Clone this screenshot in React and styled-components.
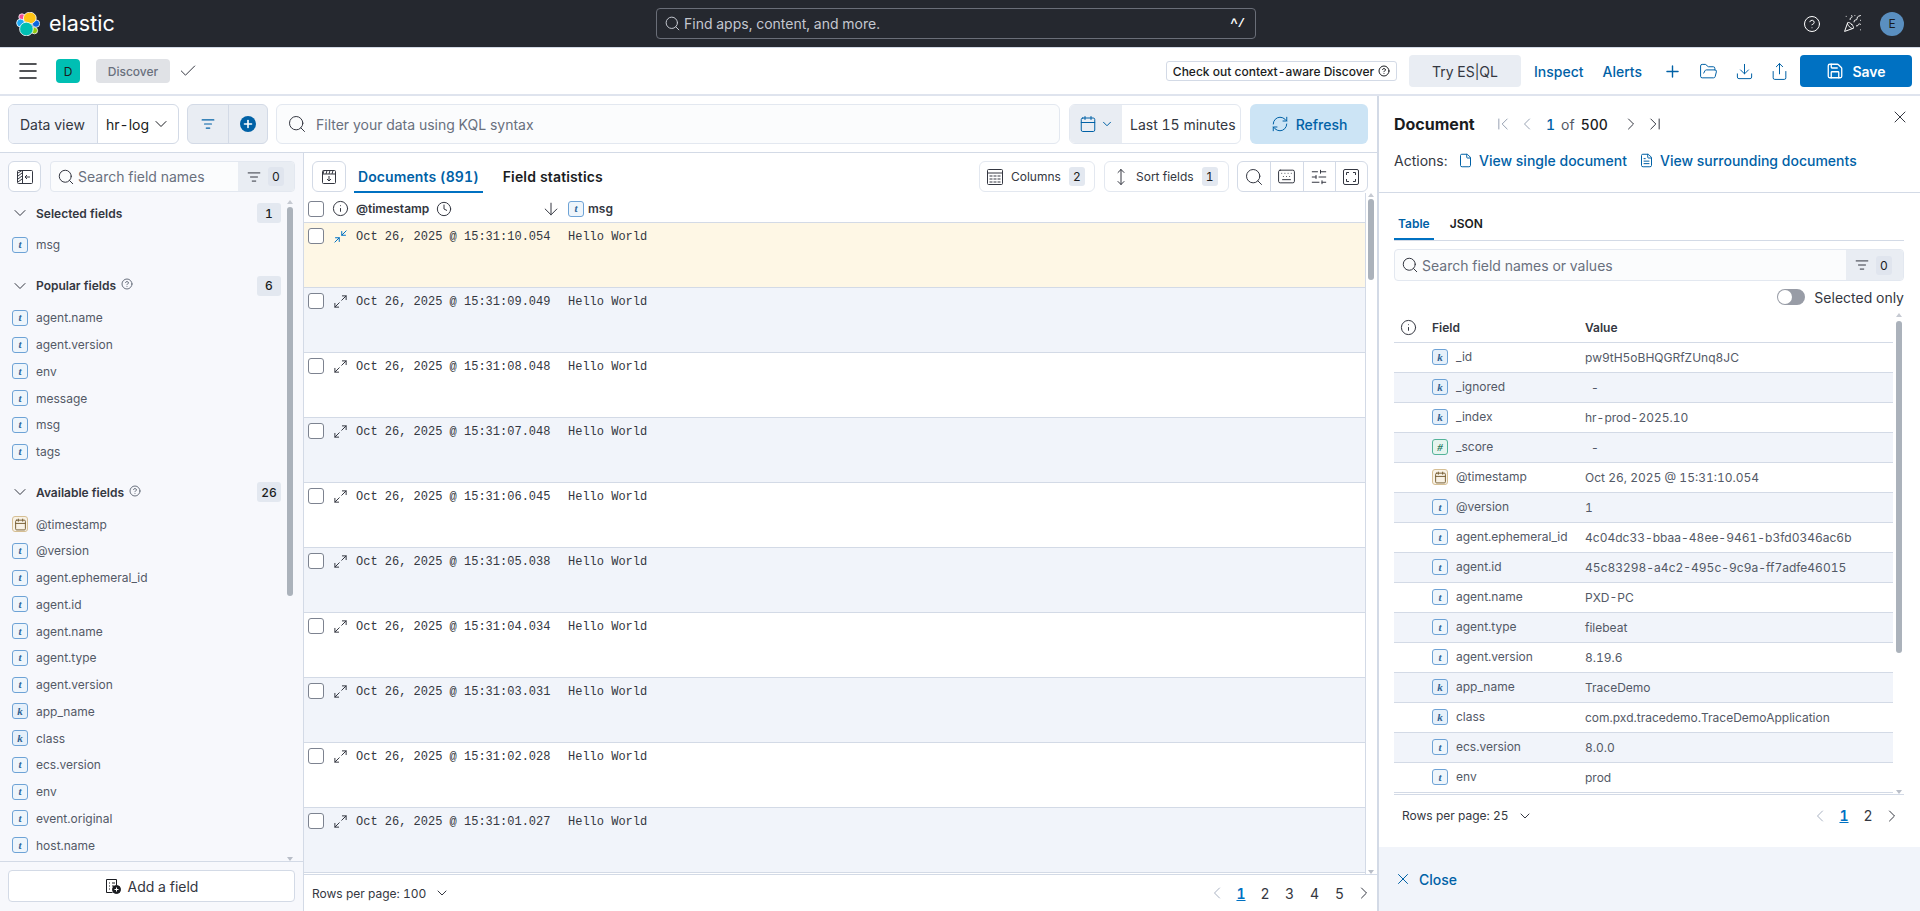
import React from "react";
import styled, { createGlobalStyle } from "styled-components";
import {
  Search, Menu, Check, CircleHelp, PartyPopper, Plus, FolderOpen, Download, Share, Save, ListFilter,
  Calendar, ChevronDown, ChevronLeft, ChevronRight, ChevronFirst, ChevronLast, RefreshCw, Info, Clock,
  ArrowDown, Maximize2, Minimize2, MoveVertical, Keyboard, SlidersHorizontal, X, File, FileText,
} from "lucide-react";

const thin = { strokeWidth: 1, absoluteStrokeWidth: true };

const Global = createGlobalStyle`
  html, body { margin: 0; padding: 0; height: 100%; overflow: hidden; background: #fff; }
  body { font-family: Inter, "Liberation Sans", sans-serif; color: #343741; font-size: 14px; font-feature-settings: "tnum" 1; }
  * { box-sizing: border-box; }
`;

const Page = styled.div`display: flex; flex-direction: column; height: 911px; width: 1920px; overflow: hidden;`;

/* top bar */
const TopBar = styled.header`
  height: 48px; flex: none; background: #25282f; border-bottom: 1px solid #d3dae6;
  display: grid; grid-template-columns: 656px 600px 1fr; align-items: center;
`;
const Brand = styled.div`display: flex; align-items: center; gap: 9px; padding-left: 16px;`;
const BrandName = styled.span`color: #fff; font-size: 21.5px; font-weight: 400; line-height: 24px; margin-top: -1px;`;
const GlobalSearch = styled.div`
  height: 31px; border: 1px solid #6a6e78; border-radius: 4px; display: flex; align-items: center;
  padding: 0 10px 0 7px; gap: 3px; color: #c4c7cf; font-size: 14px;
`;
const Shortcut = styled.span`margin-left: auto; color: #fff; font-weight: 700; font-size: 12px; font-family: "Liberation Mono", monospace;`;
const TopActions = styled.div`display: flex; align-items: center; justify-content: flex-end; padding-right: 16px; color: #fff;`;
const TopIconSlot = styled.span`display: flex; margin-right: ${(p) => p.$gap}px;`;
const Avatar = styled.span`
  width: 24px; height: 24px; border-radius: 50%; background: #5a8fc0; color: #1a1c21;
  display: flex; align-items: center; justify-content: center; font-size: 12px;
`;

/* app bar */
const AppBar = styled.div`
  height: 48px; flex: none; background: #fff; border-bottom: 2px solid #dfe4ee; display: flex; align-items: center; padding: 0 8px 0 16px;
`;
const Burger = styled.span`display: flex; color: #1a1c21; margin-right: 16px;`;
const AppTile = styled.span`
  width: 24px; height: 24px; border-radius: 4px; background: #00bfb3; color: #1a1c21; font-size: 12px;
  display: flex; align-items: center; justify-content: center; margin-right: 16px;
`;
const Crumb = styled.span`
  height: 24px; width: 74px; border-radius: 4px; background: #e0e2e6; color: #69707d; font-size: 12px; font-weight: 500;
  display: flex; align-items: center; justify-content: center; margin-right: 8px;
`;
const Notice = styled.span`
  margin-left: auto; height: 20px; width: 231px; border: 1px solid #d3dae6; border-radius: 3px; color: #1a1c21;
  font-size: 12px; font-weight: 500; display: flex; align-items: center; justify-content: center; gap: 4px; margin-right: 12px;
`;
const EsqlButton = styled.span`
  width: 112px; height: 32px; border-radius: 4px; background: #e9edf3; display: flex; align-items: center; justify-content: center;
  color: #343741; font-size: 14px; margin-right: 13px;
`;
const TextLink = styled.span`color: #0061a6; font-size: 14px; font-weight: 500; margin-right: ${(p) => p.$gap}px;`;
const AppIcon = styled.span`display: flex; color: #0061a6; margin-right: ${(p) => p.$gap}px;`;
const SaveButton = styled.span`
  width: 112px; height: 32px; border-radius: 4px; background: #0071c2; color: #fff; font-weight: 600; font-size: 14px;
  display: flex; align-items: center; justify-content: center; gap: 8px;
`;

/* body */
const Body = styled.div`flex: 1; min-height: 0; display: flex;`;
const Workspace = styled.div`width: 1377px; flex: none; display: flex; flex-direction: column;`;
const QueryBar = styled.div`
  height: 57px; flex: none; padding: 8px 9px 0 8px; display: flex; border-bottom: 1px solid #d3dae6; background: #fff;
`;
const DataView = styled.div`
  width: 171px; height: 40px; border: 1px solid #d3dae6; border-radius: 6px; display: flex; overflow: hidden; margin-right: 8px; flex: none;
`;
const DataViewLabel = styled.span`
  width: 89px; background: #f1f4fa; border-right: 1px solid #d3dae6; display: flex; align-items: center; padding-left: 11px; color: #343741;
`;
const DataViewValue = styled.span`flex: 1; display: flex; align-items: center; justify-content: space-between; padding: 0 7px 0 8px; color: #1a1c21;`;
const FilterGroup = styled.div`
  width: 81px; height: 40px; flex: none; border: 1px solid #d3dae6; border-radius: 6px; background: #e9edf3; display: grid; grid-template-columns: 1fr 1fr; margin-right: 8px; overflow: hidden;
`;
const FilterCell = styled.span`
  display: flex; align-items: center; justify-content: center; color: #0061a6; & + & { border-left: 1px solid #d3dae6; }
`;
const AddDot = styled.span`
  width: 16px; height: 16px; border-radius: 50%; background: #0061a6; color: #fff; display: flex; align-items: center; justify-content: center;
`;
const KqlInput = styled.div`
  flex: 1; height: 40px; border: 1px solid #e3e8f0; border-radius: 6px; background: #fbfcfd; display: flex; align-items: center; padding-left: 10px; gap: 9px; color: #69707d; margin-right: 9px;
`;
const DatePicker = styled.div`
  width: 172px; height: 40px; flex: none; border: 1px solid #e3e8f0; border-radius: 6px; display: flex; overflow: hidden; margin-right: 9px;
`;
const DateQuick = styled.span`
  width: 52px; background: #e9edf3; color: #0061a6; display: flex; align-items: center; justify-content: center; gap: 3px;
`;
const DateValue = styled.span`flex: 1; display: flex; align-items: center; padding-left: 8px; color: #343741;`;
const RefreshButton = styled.span`
  width: 118px; height: 40px; flex: none; border-radius: 6px; background: #cce4f5; color: #0061a6; font-weight: 500;
  display: flex; align-items: center; justify-content: center; gap: 7px;
`;

const Content = styled.div`flex: 1; min-height: 0; display: flex;`;

/* sidebar */
const Sidebar = styled.aside`
  width: 304px; flex: none; background: #f7f8fc; border-right: 1px solid #d3dae6; display: flex; flex-direction: column;
`;
const SideTop = styled.div`height: 47px; flex: none; padding: 8px 8px 0; display: flex; gap: 9px;`;
const CollapseButton = styled.span`
  width: 33px; height: 31px; flex: none; border: 1px solid #d3dae6; border-radius: 6px; background: #fff; display: flex; align-items: center; justify-content: center; color: #343741;
`;
const FieldSearch = styled.div`
  flex: 1; height: 31px; border: 1px solid #e3e8f0; border-radius: 4px; background: #fbfcfd; display: flex; align-items: center; overflow: hidden;
`;
const FieldSearchText = styled.span`
  flex: 1; display: flex; align-items: center; gap: 3px; padding-left: 6px; color: #69707d; font-size: ${(p) => p.$size}px; white-space: nowrap;
`;
const FilterAddon = styled.span`
  width: ${(p) => p.$width}px; height: 100%; background: #e9edf3; display: flex; align-items: center; padding-left: 9px; gap: 7px; color: #343741; flex: none;
`;
const ZeroCount = styled.span`
  width: 16px; height: 19px; background: #e0e5ee; border-radius: 3px; font-size: 12px; display: flex; align-items: center; justify-content: center; color: #1a1c21;
`;
const SideScrollArea = styled.div`flex: 1; min-height: 0; display: flex;`;
const FieldColumn = styled.div`width: 289px; flex: none; padding: 0 8px 0 12px; overflow: hidden;`;
const SectionHeader = styled.div`
  height: 26px; display: flex; align-items: center; margin-top: ${(p) => p.$top}px; margin-bottom: 5.6px; color: #343741; font-size: 12px; font-weight: 600;
`;
const SectionChevron = styled.span`display: flex; width: 24px; margin-left: -2px; color: #343741; margin-right: 2px;`;
const SectionHint = styled.span`display: flex; margin-left: 5px; margin-top: -3px; color: #69707d;`;
const CountBadge = styled.span`
  margin-left: auto; width: 24px; height: 20px; border-radius: 3px; background: #e3e8f0; color: #1a1c21; font-size: 12px; font-weight: 500;
  display: flex; align-items: center; justify-content: center;
`;
const FieldRow = styled.div`height: 26.75px; display: flex; align-items: center; gap: 8px; color: #535966; font-size: 12px; white-space: nowrap;`;
const Token = styled.span`
  width: 16px; height: 16px; flex: none; border-radius: 3px; border: 1px solid ${(p) => p.$line}; background: ${(p) => p.$fill}; color: ${(p) => p.$ink};
  display: flex; align-items: center; justify-content: center; font: italic 700 11px "Liberation Serif", serif; line-height: 1;
`;
const Scrollbar = styled.div`
  width: ${(p) => p.$width}px; flex: none; display: flex; flex-direction: column; align-items: center; margin-left: ${(p) => p.$left || 0}px;
`;
const ScrollArrow = styled.span`
  width: 0; height: 0; border-left: 3px solid transparent; border-right: 3px solid transparent; flex: none;
  ${(p) => (p.$down ? "border-top: 4px solid #b9bec8; margin-top: auto;" : "border-bottom: 4px solid #c6cad2;")}
`;
const ScrollThumb = styled.span`
  width: ${(p) => p.$width}px; height: ${(p) => p.$height}px; flex: none; background: #abb2bb; border-radius: 3px; margin-top: ${(p) => p.$top}px;
`;
const SideFooter = styled.div`height: 50px; flex: none; border-top: 1px solid #d3dae6; padding: 8px 8px 0; `;
const AddFieldButton = styled.span`
  height: 32px; border: 1px solid #d3dae6; border-radius: 4px; background: #fff; display: flex; align-items: center; justify-content: center; gap: 7px; color: #343741; font-size: 14px; font-weight: 400;
`;

/* documents */
const Main = styled.main`flex: 1; min-width: 0; display: flex; flex-direction: column; background: #fff;`;
const MainTools = styled.div`height: 40px; flex: none; padding: 8px 9px 0 8px; display: flex;`;
const ToolSquare = styled.span`
  width: 34px; height: 31px; border: 1px solid #d3dae6; border-radius: 6px; display: flex; align-items: center; justify-content: center; color: #343741; margin-right: 8px;
`;
const Tab = styled.span`
  height: 32px; padding: 0 ${(p) => p.$pad}px; margin-right: ${(p) => p.$gap}px; display: flex; align-items: center; white-space: nowrap; font-weight: 600; font-size: ${(p) => p.$size}px;
  letter-spacing: ${(p) => p.$track || 0}px;
  color: ${(p) => (p.$active ? "#0061a6" : "#1a1c21")}; border-bottom: 2px solid ${(p) => (p.$active ? "#0071c2" : "transparent")};
`;
const ToolButton = styled.span`
  height: 31px; width: ${(p) => p.$width}px; border: 1px solid #e3e8f0; border-radius: 6px; display: flex; align-items: center; gap: 8px; padding-left: 7px; margin-left: ${(p) => p.$left};
  color: #343741; font-size: 12px; font-weight: 400; flex: none;
`;
const ToolLabel = styled.span`margin-left: ${(p) => p.$shift || 0}px;`;
const ToolCount = styled.span`
  width: 16px; height: 19px; border-radius: 3px; background: #e3e8f0; color: #1a1c21; display: flex; align-items: center; justify-content: center; font-size: 12px;
`;
const ToolGroup = styled.span`
  height: 31px; width: 131px; margin-left: 8px; border: 1px solid #d3dae6; border-radius: 6px; display: grid; grid-template-columns: repeat(4, 1fr); flex: none;
`;
const ToolCell = styled.span`
  display: flex; align-items: center; justify-content: center; color: #343741; & + & { border-left: 1px solid #d3dae6; }
`;
const Grid = styled.div`flex: 1; min-height: 0; display: flex;`;
const GridTable = styled.div`width: 1062px; flex: none; border-right: 1px solid #d3dae6; overflow: hidden;`;
const HeadRow = styled.div`
  height: 30px; border-bottom: 1px solid #d3dae6; display: flex; align-items: center; color: #343741; font-size: 12px; font-weight: 600; padding: 2px 0 0 4px;
`;
const Box = styled.span`
  width: 16px; height: 16px; flex: none; background: #fff; border: 1px solid #7d8390; border-radius: 3px;
`;
const Slot = styled.span`width: ${(p) => p.$width}px; flex: none; display: flex; align-items: center; justify-content: ${(p) => p.$justify || "center"}; color: ${(p) => p.$color || "#343741"};`;
const DocRow = styled.div`
  height: 65px; border-bottom: 1px solid #d3dae6; display: flex; align-items: flex-start; padding: 5px 0 0 4px;
  background: ${(p) => (p.$selected ? "#fef7e5" : p.$alt ? "#f1f4fa" : "#fff")};
`;
const RowIcon = styled(Slot)`height: 16px;`;
const Stamp = styled.span`width: 212px; flex: none; margin-top: 1px; font: 12px/16px "Liberation Mono", monospace; color: #343741;`;
const Message = styled.span`margin-top: 1px; font: 12px/16px "Liberation Mono", monospace; color: #343741;`;
const GridFooter = styled.div`
  height: 37px; flex: none; border-top: 1px solid #d3dae6; display: flex; align-items: center; padding: 0 1px 0 8px; font-size: 12px; color: #343741;
`;
const RowsPerPage = styled.span`display: flex; align-items: center; gap: 8px; font-weight: 400;`;
const Pager = styled.span`margin-left: auto; display: flex; align-items: center;`;
const PageNumber = styled.span`
  width: ${(p) => p.$width}px; text-align: center; font-size: 14px; color: ${(p) => (p.$active ? "#0071c2" : "#343741")}; font-weight: ${(p) => (p.$active ? 600 : 400)}; text-decoration: ${(p) => (p.$active ? "underline" : "none")};
`;
const PagerArrow = styled.span`display: flex; width: ${(p) => p.$width}px; justify-content: center; color: ${(p) => (p.$dim ? "#a9b2c2" : "#343741")};`;

/* flyout */
const Flyout = styled.aside`flex: 1; min-width: 0; border-left: 2px solid #d3dae6; display: flex; flex-direction: column; position: relative; background: #fff;`;
const CloseCross = styled.span`position: absolute; top: 11px; right: 10px; display: flex; color: #343741;`;
const FlyHead = styled.div`height: 97px; flex: none; border-bottom: 1px solid #d3dae6; padding: 16px 15px 0;`;
const TitleLine = styled.div`height: 24px; display: flex; align-items: center;`;
const Title = styled.span`width: 97px; font-size: 16px; font-weight: 700; color: #1a1c21; flex: none;`;
const Nav = styled.span`display: flex; width: ${(p) => p.$width}px; justify-content: center; color: ${(p) => (p.$dim ? "#98a2b3" : "#343741")}; flex: none;`;
const PageOf = styled.span`display: flex; gap: 6px; font-size: 14px; font-weight: 500; color: #1a1c21; margin: 0 11px 0 7px;`;
const PageNow = styled.span`color: #0061a6;`;
const PageWord = styled.span`color: #535966; font-weight: 400;`;
const ActionLine = styled.div`display: flex; align-items: center; margin-top: 12px; height: 24px; font-size: 14px;`;
const ActionLabel = styled.span`color: #343741; width: 64px; flex: none;`;
const ActionLink = styled.span`display: flex; align-items: center; gap: 6px; color: #0061a6; font-weight: 500; margin-right: 12px; white-space: nowrap;`;
const FlyBody = styled.div`flex: 1; min-height: 0; padding: 0 16px 0 15px; display: flex; flex-direction: column;`;
const TabBar = styled.div`height: 48px; flex: none; display: flex; align-items: flex-end; border-bottom: 1px solid #d3dae6;`;
const FlySearch = styled(FieldSearch)`flex: none; height: 32px; margin-top: 8px; border-radius: 4px;`;
const ToggleLine = styled.div`height: 32px; flex: none; display: flex; align-items: center; justify-content: flex-end; gap: 9px; color: #343741; font-size: 14px;`;
const Toggle = styled.span`width: 28px; height: 16px; border-radius: 8px; background: #989ca6; display: flex; align-items: center; padding-left: 1px;`;
const ToggleKnob = styled.span`width: 14px; height: 14px; border-radius: 50%; background: #fff;`;
const TableWrap = styled.div`height: 482px; flex: none; display: flex; border-bottom: 1px solid #d3dae6;`;
const DocTable = styled.div`width: 499px; flex: none;`;
const DocHead = styled.div`height: 30px; display: flex; align-items: center; border-bottom: 1px solid #d3dae6; font-size: 12px; font-weight: 600; color: #343741;`;
const DocField = styled.div`
  height: 30px; display: flex; align-items: center; border-bottom: 1px solid #d3dae6; font-size: 12px; color: #535966; padding-bottom: 1px;
  background: ${(p) => (p.$alt ? "#f1f4fa" : "#fff")};
`;
const FieldName = styled.span`width: 137px; flex: none; padding-left: 8px; white-space: nowrap; margin-top: -2px;`;
const FieldValue = styled.span`padding-left: ${(p) => (p.$dash ? 6 : 0)}px; color: #535966; white-space: nowrap;`;
const ColLabel = styled.span`width: ${(p) => p.$width}px; flex: none; margin-left: ${(p) => p.$left || 0}px;`;
const FlyPager = styled.div`height: 53px; flex: none; padding: 0 0 12px 8px; display: flex; align-items: center; font-size: 12px; color: #343741;`;
const FlyFoot = styled.div`height: 64px; flex: none; background: #f1f4fa; display: flex; align-items: center; padding-left: 15px; gap: 7px; color: #0061a6; font-size: 14px; font-weight: 500;`;

const Logo = () => (
  <svg width="24" height="24" viewBox="0 0 24 24">
    <circle cx="6" cy="5" r="3.2" fill="#f04e98" stroke="#fff" strokeWidth=".8" />
    <circle cx="4.6" cy="11" r="4" fill="#1ba9f5" stroke="#fff" strokeWidth=".8" />
    <circle cx="20" cy="11.6" r="3.7" fill="#0b64dd" stroke="#fff" strokeWidth=".8" />
    <circle cx="18.4" cy="18.6" r="3.2" fill="#93c90e" stroke="#fff" strokeWidth=".8" />
    <ellipse cx="13.8" cy="6" rx="6.4" ry="5.8" fill="#fec514" stroke="#fff" strokeWidth=".8" />
    <circle cx="10.4" cy="17" r="6.8" fill="#00bfb3" stroke="#fff" strokeWidth=".8" />
  </svg>
);

const AddFieldGlyph = () => (
  <svg width="16" height="16" viewBox="0 0 16 16" fill="none" stroke="#1a1c21">
    <path d="M1.5 1.5h10v6M1.5 1.5v13h6M4 5h1M7 5h3M4 8h1M7 8h2M4 11h1" />
    <circle cx="11.5" cy="11.5" r="4" fill="#1a1c21" />
    <path d="M9.5 11.5h4M11.5 9.5v4" stroke="#fff" />
  </svg>
);

const CollapseGlyph = () => (
  <svg width="16" height="16" viewBox="0 0 16 16" fill="none" stroke="#343741">
    <rect x=".5" y="1.5" width="15" height="13" rx="1" />
    <path d="M5.5 1.5v13M1 4l4-2.5M1 7l4-3M1 10l4-3M1 13l4-3M13 8H8M10 6 8 8l2 2" />
  </svg>
);

const SaveDocGlyph = () => (
  <svg width="16" height="16" viewBox="0 0 16 16" fill="none" stroke="#343741">
    <rect x="1.5" y="1.5" width="13" height="13" rx="1" />
    <path d="M1.5 5h13M3 1.5 2 5M6 1.5 5 5M9 1.5 8 5M12 1.5 11 5M8 7v5M6 10l2 2 2-2" />
  </svg>
);

const ColumnsGlyph = () => (
  <svg width="16" height="16" viewBox="0 0 16 16" fill="none" stroke="#343741">
    <rect x=".5" y=".5" width="15" height="15" rx="1" />
    <path d="M.5 4h15M2.5 7h3M6.500 7h3M10.500 7h3M2.500 10h3M6.500 10h3M10.500 10h3M2.500 13h3M6.500 13h3M10.500 13h3" />
  </svg>
);

const FullscreenGlyph = () => (
  <svg width="16" height="16" viewBox="0 0 16 16" fill="none" stroke="#343741">
    <rect x=".5" y=".5" width="15" height="15" rx="1.500" />
    <path d="M3.500 6V3.500H6M10 3.500h2.500V6M12.500 10v2.500H10M6 12.500H3.500V10" />
  </svg>
);

const kinds = {
  t: { $line: "#6ea3d6", $fill: "#eef5fb", $ink: "#2f6799" },
  k: { $line: "#6ea3d6", $fill: "#e6f0fa", $ink: "#2f5f8f" },
  "#": { $line: "#54b399", $fill: "#e6f5ef", $ink: "#2b7a5f" },
  d: { $line: "#d6bf94", $fill: "#f8f2e6", $ink: "#7a6238" },
};
const FieldToken = ({ kind }) => (
  <Token {...kinds[kind]}>{kind === "d" ? <Calendar size={13} {...thin} /> : kind}</Token>
);

const popular = ["agent.name", "agent.version", "env", "message", "msg", "tags"];
const available = [
  ["d", "@timestamp"], ["t", "@version"], ["t", "agent.ephemeral_id"], ["t", "agent.id"], ["t", "agent.name"], ["t", "agent.type"],
  ["t", "agent.version"], ["k", "app_name"], ["k", "class"], ["t", "ecs.version"], ["t", "env"], ["t", "event.original"], ["t", "host.name"],
];
const stamps = ["10.054", "09.049", "08.048", "07.048", "06.045", "05.038", "04.034", "03.031", "02.028", "01.027"];
const docFields = [
  ["k", "_id", "pw9tH5oBHQGRfZUnq8JC"], ["k", "_ignored", "-"], ["k", "_index", "hr-prod-2025.10"], ["#", "_score", "-"],
  ["d", "@timestamp", "Oct 26, 2025 @ 15:31:10.054"], ["t", "@version", "1"], ["t", "agent.ephemeral_id", "4c04dc33-bbaa-48ee-9461-b3fd0346ac6b"],
  ["t", "agent.id", "45c83298-a4c2-495c-9c9a-ff7adfe46015"], ["t", "agent.name", "PXD-PC"], ["t", "agent.type", "filebeat"], ["t", "agent.version", "8.19.6"],
  ["k", "app_name", "TraceDemo"], ["k", "class", "com.pxd.tracedemo.TraceDemoApplication"], ["t", "ecs.version", "8.0.0"], ["t", "env", "prod"],
];

const Section = ({ title, count, hint, top }) => (
  <SectionHeader $top={top}>
    <SectionChevron><ChevronDown size={20} {...thin} /></SectionChevron>
    {title}
    {hint && <SectionHint><CircleHelp size={12} {...thin} /></SectionHint>}
    <CountBadge>{count}</CountBadge>
  </SectionHeader>
);

export default function App() {
  return (
    <Page>
      <Global />
      <TopBar>
        <Brand><Logo /><BrandName>elastic</BrandName></Brand>
        <GlobalSearch>
          <Search size={17} {...thin} />
          Find apps, content, and more.
          <Shortcut>^/</Shortcut>
        </GlobalSearch>
        <TopActions>
          <TopIconSlot $gap={22}><CircleHelp size={18} {...thin} /></TopIconSlot>
          <TopIconSlot $gap={18}><PartyPopper size={19} {...thin} /></TopIconSlot>
          <Avatar>E</Avatar>
        </TopActions>
      </TopBar>

      <AppBar>
        <Burger><Menu size={24} strokeWidth={1.6} absoluteStrokeWidth /></Burger>
        <AppTile>D</AppTile>
        <Crumb>Discover</Crumb>
        <Check size={20} {...thin} />
        <Notice>Check out context-aware Discover <CircleHelp size={12} {...thin} /></Notice>
        <EsqlButton>Try ES|QL</EsqlButton>
        <TextLink $gap={19}>Inspect</TextLink>
        <TextLink $gap={21}>Alerts</TextLink>
        <AppIcon $gap={17}><Plus size={19} strokeWidth={1.4} absoluteStrokeWidth /></AppIcon>
        <AppIcon $gap={17}><FolderOpen size={19} {...thin} /></AppIcon>
        <AppIcon $gap={16}><Download size={19} {...thin} /></AppIcon>
        <AppIcon $gap={11}><Share size={19} {...thin} /></AppIcon>
        <SaveButton><Save size={18} strokeWidth={1.3} absoluteStrokeWidth />Save</SaveButton>
      </AppBar>

      <Body>
        <Workspace>
          <QueryBar>
            <DataView>
              <DataViewLabel>Data view</DataViewLabel>
              <DataViewValue>hr-log<ChevronDown size={20} {...thin} /></DataViewValue>
            </DataView>
            <FilterGroup>
              <FilterCell><ListFilter size={14} strokeWidth={1.2} absoluteStrokeWidth /></FilterCell>
              <FilterCell><AddDot><Plus size={12} strokeWidth={1.6} absoluteStrokeWidth /></AddDot></FilterCell>
            </FilterGroup>
            <KqlInput>
              <Search size={20} {...thin} color="#343741" />
              Filter your data using KQL syntax
            </KqlInput>
            <DatePicker>
              <DateQuick><Calendar size={18} {...thin} /><ChevronDown size={14} {...thin} /></DateQuick>
              <DateValue>Last 15 minutes</DateValue>
            </DatePicker>
            <RefreshButton><RefreshCw size={18} {...thin} />Refresh</RefreshButton>
          </QueryBar>

          <Content>
            <Sidebar>
              <SideTop>
                <CollapseButton><CollapseGlyph /></CollapseButton>
                <FieldSearch>
                  <FieldSearchText $size={14}><Search size={18} {...thin} color="#343741" />Search field names</FieldSearchText>
                  <FilterAddon $width={56}><ListFilter size={14} {...thin} /><ZeroCount>0</ZeroCount></FilterAddon>
                </FieldSearch>
              </SideTop>
              <SideScrollArea>
                <FieldColumn>
                  <Section title="Selected fields" count="1" top={0} />
                  <FieldRow><FieldToken kind="t" />msg</FieldRow>
                  <Section title="Popular fields" count="6" hint top={14.6} />
                  {popular.map((f) => <FieldRow key={f}><FieldToken kind="t" />{f}</FieldRow>)}
                  <Section title="Available fields" count="26" hint top={14} />
                  {available.map(([k, f]) => <FieldRow key={f}><FieldToken kind={k} />{f}</FieldRow>)}
                </FieldColumn>
                <Scrollbar $width={6} $left={-2}>
                  <ScrollArrow />
                  <ScrollThumb $width={6} $height={389} $top={3} />
                  <ScrollArrow $down />
                </Scrollbar>
              </SideScrollArea>
              <SideFooter><AddFieldButton><AddFieldGlyph />Add a field</AddFieldButton></SideFooter>
            </Sidebar>

            <Main>
              <MainTools>
                <ToolSquare><SaveDocGlyph /></ToolSquare>
                <Tab $active $pad={4} $gap={20} $size={14} $track={0.1}>Documents (891)</Tab>
                <Tab $pad={0} $gap={0} $size={14} $track={0.15}>Field statistics</Tab>
                <ToolButton $width={116} $left="auto"><ColumnsGlyph />Columns<ToolCount>2</ToolCount></ToolButton>
                <ToolButton $width={125} $left="9px"><MoveVertical size={18} {...thin} /><ToolLabel $shift={-2}>Sort fields</ToolLabel><ToolCount>1</ToolCount></ToolButton>
                <ToolGroup>
                  <ToolCell><Search size={20} {...thin} /></ToolCell>
                  <ToolCell><Keyboard size={19} {...thin} /></ToolCell>
                  <ToolCell><SlidersHorizontal size={18} {...thin} /></ToolCell>
                  <ToolCell><FullscreenGlyph /></ToolCell>
                </ToolGroup>
              </MainTools>
              <Grid>
                <GridTable>
                  <HeadRow>
                    <Box />
                    <Slot $width={32}><Info size={17} {...thin} /></Slot>
                    <ColLabel $width={80}>@timestamp</ColLabel>
                    <Slot $width={16}><Clock size={16} {...thin} /></Slot>
                    <Slot $width={109} $justify="flex-end"><ArrowDown size={20} {...thin} /></Slot>
                    <Slot $width={23} $justify="flex-end"><FieldToken kind="t" /></Slot>
                    <ColLabel $width={40} $left={4}>msg</ColLabel>
                  </HeadRow>
                  {stamps.map((s, i) => (
                    <DocRow key={s} $selected={i === 0} $alt={i % 2 === 1}>
                      <Box />
                      <RowIcon $width={32} $color={i === 0 ? "#0071c2" : "#343741"}>
                        {i === 0 ? <Minimize2 size={15} {...thin} /> : <Maximize2 size={15} {...thin} />}
                      </RowIcon>
                      <Stamp>{`Oct 26, 2025 @ 15:31:${s}`}</Stamp>
                      <Message>Hello World</Message>
                    </DocRow>
                  ))}
                </GridTable>
                <Scrollbar $width={10}>
                  <ScrollArrow />
                  <ScrollThumb $width={6} $height={81} $top={2} />
                  <ScrollArrow $down />
                </Scrollbar>
              </Grid>
              <GridFooter>
                <RowsPerPage>Rows per page: 100<ChevronDown size={16} {...thin} /></RowsPerPage>
                <Pager>
                  <PagerArrow $width={24} $dim><ChevronLeft size={20} {...thin} /></PagerArrow>
                  <PageNumber $width={24} $active>1</PageNumber>
                  <PageNumber $width={24}>2</PageNumber>
                  <PageNumber $width={25}>3</PageNumber>
                  <PageNumber $width={25}>4</PageNumber>
                  <PageNumber $width={25}>5</PageNumber>
                  <PagerArrow $width={24}><ChevronRight size={20} {...thin} /></PagerArrow>
                </Pager>
              </GridFooter>
            </Main>
          </Content>
        </Workspace>

        <Flyout>
          <CloseCross><X size={20} {...thin} /></CloseCross>
          <FlyHead>
            <TitleLine>
              <Title>Document</Title>
              <Nav $width={24} $dim><ChevronFirst size={20} {...thin} /></Nav>
              <Nav $width={24} $dim><ChevronLeft size={20} {...thin} /></Nav>
              <PageOf><PageNow>1</PageNow><PageWord>of</PageWord>500</PageOf>
              <Nav $width={24}><ChevronRight size={20} {...thin} /></Nav>
              <Nav $width={24}><ChevronLast size={20} {...thin} /></Nav>
            </TitleLine>
            <ActionLine>
              <ActionLabel>Actions:</ActionLabel>
              <ActionLink><File size={15} {...thin} />View single document</ActionLink>
              <ActionLink><FileText size={15} {...thin} />View surrounding documents</ActionLink>
            </ActionLine>
          </FlyHead>
          <FlyBody>
            <TabBar>
              <Tab $active $pad={4} $gap={16} $size={12}>Table</Tab>
              <Tab $pad={0} $gap={0} $size={12}>JSON</Tab>
            </TabBar>
            <FlySearch>
              <FieldSearchText $size={14}><Search size={18} {...thin} color="#343741" />Search field names or values</FieldSearchText>
              <FilterAddon $width={57}><ListFilter size={14} {...thin} /><ZeroCount>0</ZeroCount></FilterAddon>
            </FlySearch>
            <ToggleLine><Toggle><ToggleKnob /></Toggle>Selected only</ToggleLine>
            <TableWrap>
              <DocTable>
                <DocHead>
                  <Slot $width={28}><Info size={17} {...thin} /></Slot>
                  <ColLabel $width={153} $left={10}>Field</ColLabel>
                  <ColLabel $width={100}>Value</ColLabel>
                </DocHead>
                {docFields.map(([k, f, v], i) => (
                  <DocField key={f} $alt={i % 2 === 1}>
                    <Slot $width={38} />
                    <FieldToken kind={k} />
                    <FieldName>{f}</FieldName>
                    <FieldValue $dash={v === "-"}>{v}</FieldValue>
                  </DocField>
                ))}
              </DocTable>
              <Scrollbar $width={11}>
                <ScrollArrow />
                <ScrollThumb $width={6} $height={332} $top={4} />
                <ScrollArrow $down />
              </Scrollbar>
            </TableWrap>
            <FlyPager>
              <RowsPerPage>Rows per page: 25<ChevronDown size={16} {...thin} /></RowsPerPage>
              <Pager>
                <PagerArrow $width={24} $dim><ChevronLeft size={20} {...thin} /></PagerArrow>
                <PageNumber $width={24} $active>1</PageNumber>
                <PageNumber $width={24}>2</PageNumber>
                <PagerArrow $width={24}><ChevronRight size={20} {...thin} /></PagerArrow>
              </Pager>
            </FlyPager>
          </FlyBody>
          <FlyFoot><X size={18} {...thin} />Close</FlyFoot>
        </Flyout>
      </Body>
    </Page>
  );
}
